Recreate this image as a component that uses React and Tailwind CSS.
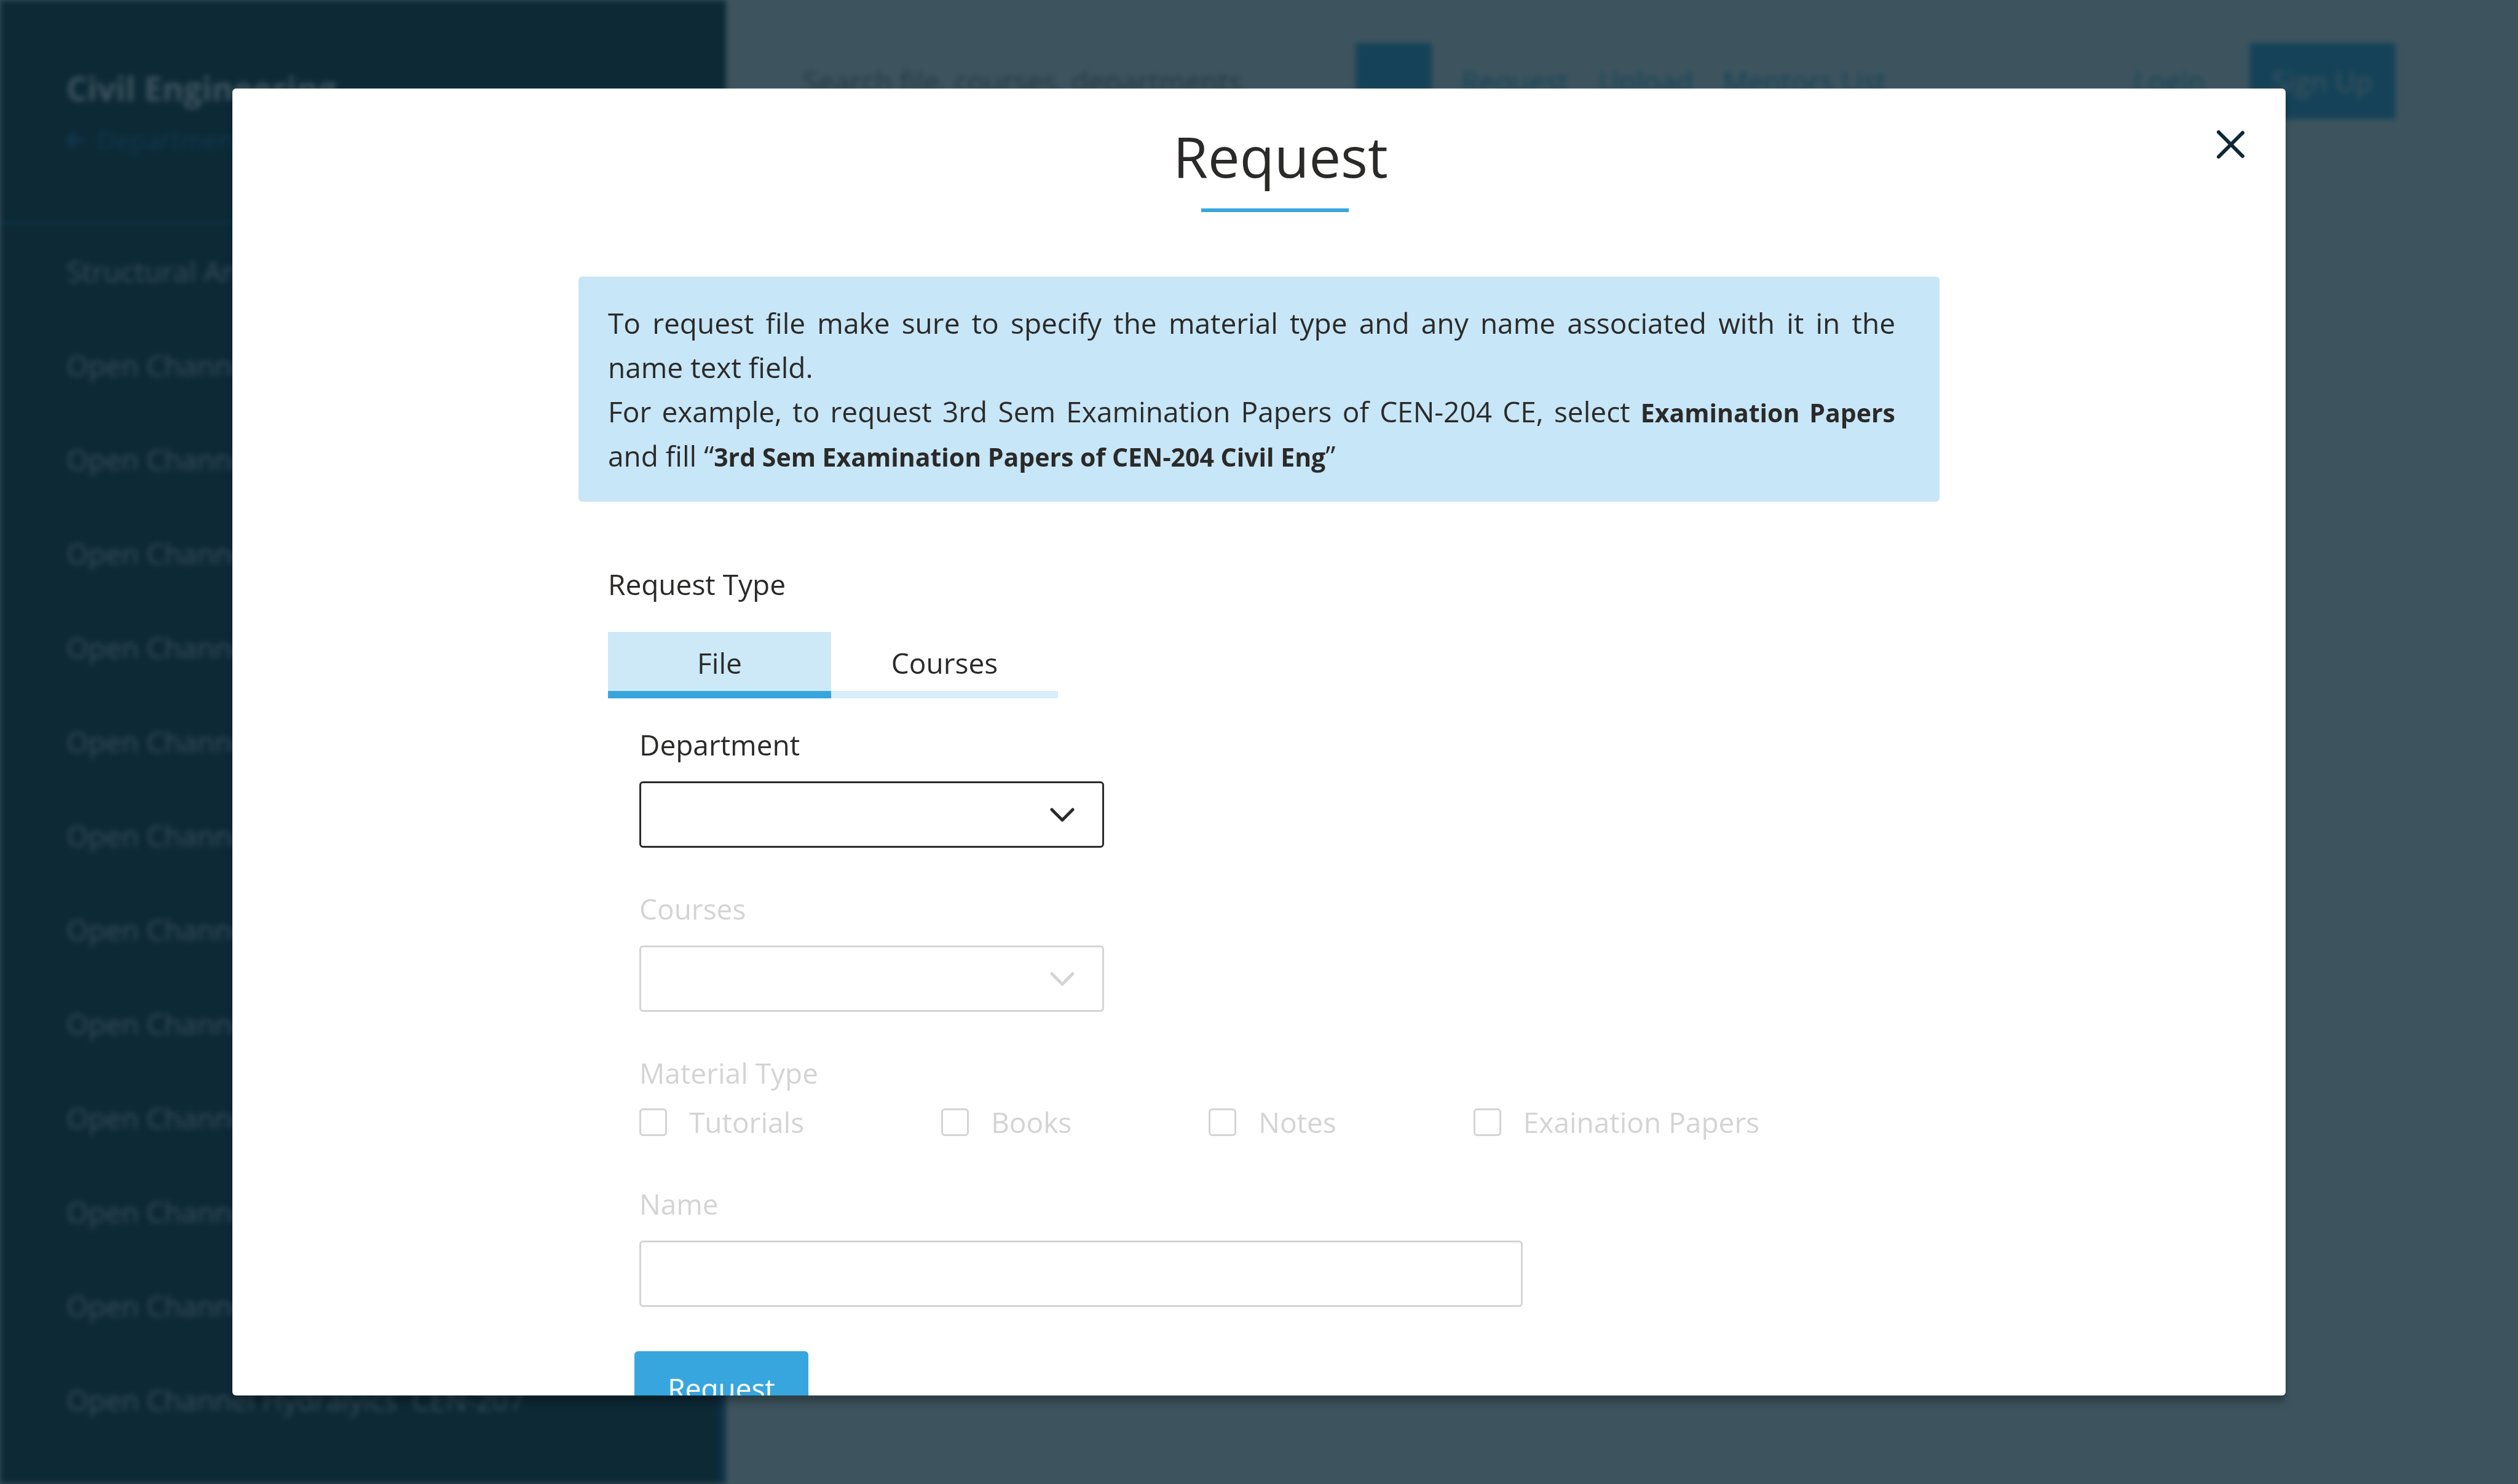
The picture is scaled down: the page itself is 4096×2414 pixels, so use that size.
import { useState } from "react";

const courses = [
  "Structural Analysis  CEN-203",
  ...Array.from({ length: 12 }, () => "Open Channel Hydralyics  CEN-207"),
];

const materials = ["Tutorials", "Books", "Notes", "Exaination Papers"];

function Sidebar() {
  return (
    <aside className="flex w-[1181px] shrink-0 flex-col bg-[#0d2936]">
      <div className="flex h-[364px] flex-col border-b-4 border-[#1f569c] pl-[108px] pt-[108px]">
        <h2 className="text-[53px] font-bold leading-[72px] text-white">Civil Engineering</h2>
        <a href="#departments" className="mt-[18px] flex items-center gap-[18px] text-[42px] font-medium leading-[60px] text-[#2478bd]">
          <svg viewBox="0 0 32 32" className="size-8" fill="none" stroke="currentColor" strokeWidth="5" aria-hidden="true">
            <path d="M30 16H4M14 5L3 16l11 11" />
          </svg>
          Departments
        </a>
      </div>
      <ul className="grow border-r-[12px] border-[#1b4f8f] pl-[108px]">
        {courses.map((course, i) => (
          <li key={i} className="flex h-[153px] items-center whitespace-pre text-[46px] font-medium leading-[72px] text-[#dfe2e4]">
            {course}
          </li>
        ))}
      </ul>
    </aside>
  );
}

function Header() {
  return (
    <header className="flex h-[264px] grow items-center pl-[125px] pr-[199px] text-[46px] leading-[72px] text-[#38a6de]">
      <input
        type="text"
        aria-label="Search"
        placeholder="Search file, courses, departments"
        className="h-[124px] w-[899px] placeholder:text-[#7d7d7d]"
      />
      <button type="button" aria-label="Search" className="h-[124px] w-[124px] shrink-0 bg-[#38a6de]" />
      <nav className="ml-12 flex grow items-center gap-12 whitespace-nowrap font-medium">
        <a href="#request">Request</a>
        <a href="#upload">Upload</a>
        <a href="#mentors">Mentors List</a>
      </nav>
      <a href="#login" className="font-medium">Login</a>
      <button type="button" className="ml-[72px] h-[124px] w-[238px] bg-[#38a6de] text-white">
        Sign Up
      </button>
    </header>
  );
}

function SelectField({ id, label, disabled }) {
  return (
    <div className={disabled ? "flex flex-col gap-6 text-[#d4d4d4]" : "flex flex-col gap-6"}>
      <label htmlFor={id}>{label}</label>
      <div className="grid w-[756px] items-center">
        <select
          id={id}
          disabled={disabled}
          className="col-start-1 row-start-1 h-[108px] w-full appearance-none rounded-md border-[3px] border-current bg-white px-9 opacity-100"
        />
        <svg viewBox="0 0 40 24" className="pointer-events-none col-start-1 row-start-1 mr-12 h-6 w-10 justify-self-end" fill="none" stroke="currentColor" strokeWidth="5" strokeLinecap="round" strokeLinejoin="round" aria-hidden="true">
          <path d="M3 4l17 17L37 4" />
        </svg>
      </div>
    </div>
  );
}

function RequestDialog() {
  const [tab, setTab] = useState("file");
  const active = "border-[#38a6de] bg-[#cde9f7]";
  const idle = "border-[#d8eef9]";
  return (
    <div
      role="dialog"
      aria-modal="true"
      aria-labelledby="dialog-title"
      className="relative h-full w-full overflow-hidden rounded-md bg-white pt-[62px] text-[46px] leading-[72px] text-[#2b2a29] shadow-[0_12px_12px_rgba(0,0,0,0.25)]"
    >
      <button type="button" aria-label="Close" className="absolute right-[66px] top-[68px] text-[#0d2936]">
        <svg viewBox="0 0 46 46" className="size-[46px]" fill="none" stroke="currentColor" strokeWidth="6" strokeLinecap="round" aria-hidden="true">
          <path d="M3 3l39 39M3 43L42 4" />
        </svg>
      </button>

      <div className="flex flex-col items-center">
        <h1 id="dialog-title" className="pl-[70px] text-[92px] leading-[96px]">Request</h1>
        <div className="ml-[52px] mt-[37px] h-1.5 w-60 bg-[#38a6de]" />
      </div>

      <div className="mx-auto mt-[105px] w-full max-w-[2214px]">
        <p className="rounded-md bg-[#c7e6f7] py-[39px] pl-12 pr-[72px] text-justify">
          To request file make sure to specify the material type and any name associated with it in the name text field.
          <br />
          For example, to request 3rd Sem Examination Papers of CEN-204 CE, select{" "}
          <b className="text-[41px] leading-none">Examination Papers</b> and fill “
          <b className="text-[41px] leading-none">3rd Sem Examination Papers of CEN-204 Civil Eng</b>”
        </p>

        <form className="pl-12" onSubmit={(e) => e.preventDefault()}>
          <h2 id="request-type" className="mt-[98px]">Request Type</h2>
          <div role="tablist" aria-labelledby="request-type" className="mt-[42px] flex">
            <button
              type="button"
              role="tab"
              aria-selected={tab === "file"}
              onClick={() => setTab("file")}
              className={`h-[108px] w-[363px] border-b-[12px] pt-1 ${tab === "file" ? active : idle}`}
            >
              File
            </button>
            <button
              type="button"
              role="tab"
              aria-selected={tab === "courses"}
              onClick={() => setTab("courses")}
              className={`h-[108px] w-[369px] border-b-[12px] pt-1 ${tab === "courses" ? active : idle}`}
            >
              Courses
            </button>
          </div>

          <div className="flex flex-col pl-[51px] pt-[39px]">
            <div className="flex flex-col gap-[63px]">
              <SelectField id="department" label="Department" />
              <SelectField id="courses" label="Courses" disabled />
              <fieldset disabled className="text-[#d4d4d4]">
                <legend>Material Type</legend>
                <div className="mt-2 flex gap-[223px]">
                  {materials.map((name) => (
                    <label key={name} className="flex items-center gap-9 whitespace-nowrap">
                      <input type="checkbox" className="size-[45px] appearance-none rounded-md border-[3px] border-current" />
                      {name}
                    </label>
                  ))}
                </div>
              </fieldset>
            </div>
            <label htmlFor="name" className="mt-[61px] text-[#d4d4d4]">Name</label>
            <input
              id="name"
              type="text"
              disabled
              className="mt-6 h-[108px] w-[1437px] rounded-md border-[3px] border-[#d4d4d4] bg-white px-9"
            />
            <button type="submit" className="-ml-2 mt-[72px] self-start rounded-md bg-[#38a6de] px-[54px] py-6 text-white">
              Request
            </button>
          </div>
        </form>
      </div>
    </div>
  );
}

export default function App() {
  return (
    <div className="h-screen overflow-hidden bg-white font-['Open_Sans',sans-serif]">
      <div className="flex h-screen overflow-hidden bg-white blur-[5px]" aria-hidden="true" inert>
        <Sidebar />
        <Header />
      </div>
      <div className="fixed inset-0 bg-[#0d2936]/80 px-[378px] py-36">
        <RequestDialog />
      </div>
    </div>
  );
}
